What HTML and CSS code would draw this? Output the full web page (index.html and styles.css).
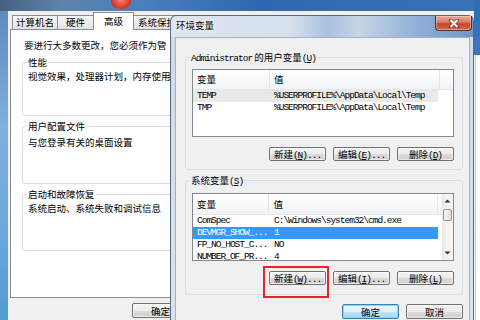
FILE: index.html
```html
<html>
  <head>
    <title>环境变量</title>
    <link rel="stylesheet" href="styles.css">
  </head>
  <body>
    <div class="side-window"></div>

    <!-- behind: system properties, only the part left of the dialog shows -->
    <div class="sysprop">
      <span class="sysprop-orb"></span>
      <div class="sysprop-client">
        <div class="tabs">
          <div class="tab tab-name">计算机名</div>
          <div class="tab tab-hw">硬件</div>
          <div class="tab tab-sel">高级</div>
          <div class="tab tab-prot">系统保护</div>
        </div>
        <div class="tab-panel">
          <p class="intro">要进行大多数更改，您必须作为管</p>
          <div class="sp-group sp-group-perf">
            <div class="sp-label">性能</div>
            <p class="sp-text">视觉效果，处理器计划，内存使用</p>
          </div>
          <div class="sp-group sp-group-profile">
            <div class="sp-label">用户配置文件</div>
            <p class="sp-text sp-text-profile">与您登录有关的桌面设置</p>
          </div>
          <div class="sp-group sp-group-boot">
            <div class="sp-label">启动和故障恢复</div>
            <p class="sp-text">系统启动、系统失败和调试信息</p>
          </div>
        </div>
        <div class="sysprop-footer">
          <button class="btn">确定</button>
        </div>
      </div>
    </div>

    <!-- front: environment variables -->
    <div class="envdlg">
      <div class="env-title">
        <span class="env-title-text">环境变量</span>
        <span class="close-btn">
          <svg width="12" height="9" viewBox="0 0 12 9">
            <path d="M2.5 1 L9.5 8 M9.5 1 L2.5 8" stroke="#5a130b" stroke-width="3.4" stroke-linecap="round" opacity="0.6"/>
            <path d="M2.5 1 L9.5 8 M9.5 1 L2.5 8" stroke="#ffffff" stroke-width="2"/>
          </svg>
        </span>
      </div>

      <div class="env-client">
        <div class="group group-user">
          <div class="group-label"><span class="mono">Administrator</span> 的用户变量<span class="mono">(<u>U</u>)</span></div>
          <div class="listview">
            <div class="lv-body">
              <div class="lv-head">
                <span class="col col1">变量</span>
                <span class="col col2">值</span>
                <span class="col col3"></span>
              </div>
              <div class="lv-row inactive">
                <span class="col col1 mono">TEMP</span>
                <span class="col col2 mono">%USERPROFILE%\AppData\Local\Temp</span>
              </div>
              <div class="lv-row">
                <span class="col col1 mono">TMP</span>
                <span class="col col2 mono">%USERPROFILE%\AppData\Local\Temp</span>
              </div>
            </div>
          </div>
          <div class="btn-row">
            <button class="btn">新建<span class="mono">(<u>N</u>)...</span></button>
            <button class="btn">编辑<span class="mono">(<u>E</u>)...</span></button>
            <button class="btn">删除<span class="mono">(<u>D</u>)</span></button>
          </div>
        </div>

        <div class="group group-sys">
          <div class="group-label">系统变量<span class="mono">(<u>S</u>)</span></div>
          <div class="listview">
            <div class="lv-body">
              <div class="lv-head lv-head-sys">
                <span class="col col1">变量</span>
                <span class="col col2">值</span>
                <span class="col col3"></span>
              </div>
              <div class="lv-row">
                <span class="col col1 mono">ComSpec</span>
                <span class="col col2 mono">C:\Windows\system32\cmd.exe</span>
              </div>
              <div class="lv-row selected">
                <span class="col col1 mono">DEVMGR_SHOW_...</span>
                <span class="col col2 mono">1</span>
              </div>
              <div class="lv-row">
                <span class="col col1 mono">FP_NO_HOST_C...</span>
                <span class="col col2 mono">NO</span>
              </div>
              <div class="lv-row">
                <span class="col col1 mono">NUMBER_OF_PR...</span>
                <span class="col col2 mono">4</span>
              </div>
            </div>
            <div class="lv-scroll">
              <span class="sb-arrow">
                <svg width="7" height="4" viewBox="0 0 7 4"><path d="M0.5 3.5 L3.5 0.5 L6.5 3.5 Z" fill="#333"/></svg>
              </span>
              <span class="sb-thumb"></span>
              <span class="sb-arrow sb-down">
                <svg width="7" height="4" viewBox="0 0 7 4"><path d="M0.5 0.5 L3.5 3.5 L6.5 0.5 Z" fill="#333"/></svg>
              </span>
            </div>
          </div>
          <div class="btn-row">
            <button class="btn btn-marked">新建<span class="mono">(<u>W</u>)...</span></button>
            <button class="btn">编辑<span class="mono">(<u>I</u>)...</span></button>
            <button class="btn">删除<span class="mono">(<u>L</u>)</span></button>
          </div>
        </div>

        <div class="env-footer">
          <button class="btn btn-ok btn-default">确定</button>
          <button class="btn btn-ok">取消</button>
        </div>
      </div>
    </div>
  </body>
</html>
```

FILE: styles.css
```css
body {
  margin: 0;
  width: 480px;
  height: 320px;
  overflow: hidden;
  position: relative;
  font-family: "Noto Sans CJK SC", sans-serif;
  font-size: 9.5px;
  line-height: 12px;
  color: #000;
  background: linear-gradient(180deg, #2f6ab2 0, #3a78c0 55px, #eef4fb 55px, #f7fafd 100%);
}

p {
  margin: 0;
  white-space: nowrap;
}

.mono {
  font-family: "Liberation Mono", monospace;
  font-size: 9.5px;
  letter-spacing: -1px;
}

.side-window {
  position: absolute;
  left: 475px;
  top: 55px;
  width: 5px;
  height: 265px;
  border-left: 1px solid #b9cde4;
  background: #fbfdff;
}

/* ---------- buttons ---------- */

.btn {
  height: 14px;
  width: 57px;
  padding: 0;
  border: 1px solid #707070;
  border-radius: 2px;
  background: linear-gradient(180deg, #f4f4f4 0%, #ebebeb 50%, #dddddd 50%, #cfcfcf 100%);
  box-shadow: inset 0 0 0 1px rgba(255, 255, 255, 0.6);
  font-family: "Noto Sans CJK SC", sans-serif;
  font-size: 9.5px;
  line-height: 12px;
  color: #000;
  white-space: nowrap;
  box-sizing: border-box;
}

.btn u {
  text-decoration-thickness: 1px;
}

.btn-ok {
  height: 15px;
}

.btn-default {
  border-color: #3c7fb1;
  background: linear-gradient(180deg, #eaf6fd 0%, #d9f0fc 50%, #bee6fd 50%, #a7d9f5 100%);
  box-shadow: inset 0 0 0 1px #8fd4f6;
}

.btn-marked {
  position: relative;
}

.btn-marked::after {
  content: "";
  position: absolute;
  left: -7px;
  right: -4px;
  top: -6px;
  bottom: -14px;
  border: 2px solid #e3262b;
}

/* ---------- system properties (behind) ---------- */

.sysprop {
  position: absolute;
  left: 0;
  top: 0;
  width: 474px;
  height: 320px;
  padding: 11px 0 0 8px;
  box-sizing: border-box;
  background:
    linear-gradient(90deg, #45617f 0, #5f82aa 60px, #4b7fbd 140px, #2f68b0 260px, #3a72b8 100%) top / 100% 11px no-repeat,
    linear-gradient(180deg, #5c87b8 0, #7fb0de 40%, #6aa6da 75%, #4f9bd2 100%);
}

.sysprop-orb {
  position: absolute;
  left: 111px;
  top: -6px;
  width: 20px;
  height: 15px;
  border-radius: 50%;
  background: radial-gradient(circle at 50% 35%, #ff8a78, #d0321f 70%);
}

.sysprop-client {
  height: 100%;
  background: #f0f0f0;
  padding: 1px 6px 0 2px;
  box-sizing: border-box;
  display: flex;
  flex-direction: column;
}

.tabs {
  display: flex;
  align-items: flex-end;
  height: 17px;
  padding-left: 2px;
}

.tab {
  height: 14px;
  border: 1px solid #898c95;
  border-bottom: none;
  margin-left: -1px;
  background: linear-gradient(180deg, #f6f6f6, #e4e4e4);
  text-align: center;
  line-height: 13px;
  box-sizing: border-box;
  white-space: nowrap;
}

.tab-name {
  width: 46px;
  margin-left: 0;
}

.tab-hw {
  width: 37px;
}

.tab-sel {
  width: 41px;
  height: 18px;
  margin-bottom: -1px;
  background: #fff;
  line-height: 16px;
  position: relative;
  z-index: 1;
}

.tab-prot {
  width: 48px;
}

.tab-panel {
  width: 168px;
  height: 269px;
  border: 1px solid #898c95;
  background: #fff;
  padding: 0 0 0 11px;
  box-sizing: border-box;
  overflow: hidden;
}

.intro {
  margin: 9px 0 0 2px;
}

.sp-group {
  border: 1px solid #d5dfe5;
  border-radius: 3px;
  width: 170px;
  margin-top: 10px;
  padding-left: 5px;
  box-sizing: border-box;
}

.sp-group-perf {
  height: 54px;
  margin-top: 11px;
}

.sp-group-profile {
  height: 58px;
}

.sp-group-boot {
  height: 57px;
}

.sp-label {
  width: fit-content;
  margin: -7px 0 0 -1px;
  padding: 0 1px;
  background: #fff;
  white-space: nowrap;
}

.sp-text {
  margin-top: 2px;
}

.sp-text-profile {
  margin-top: 4px;
}

.sysprop-footer {
  display: flex;
  padding: 5px 0 0 122px;
}

.sysprop-footer .btn {
  height: 15px;
}

/* ---------- environment variables (front) ---------- */

.envdlg {
  position: absolute;
  left: 170px;
  top: 15px;
  width: 304px;
  height: 320px;
  border: 1px solid #56697f;
  border-bottom: none;
  border-radius: 6px 6px 0 0;
  padding: 0 3px 0 4px;
  box-sizing: border-box;
  display: flex;
  flex-direction: column;
  background:
    linear-gradient(90deg, #dde5ee 0%, #d6e0eb 40%, #a9c1dd 52%, #c6d5e6 62%, #8eafd5 82%, #6f97c8 100%) top / 100% 21px no-repeat,
    linear-gradient(180deg, #cfdbe8, #d8e3ee);
}

.env-title {
  display: flex;
  align-items: flex-start;
  height: 21px;
  flex-shrink: 0;
}

.env-title-text {
  padding: 3px 0 0 1px;
  text-shadow: 0 0 4px #fff, 0 0 2px #fff;
}

.close-btn {
  margin-left: auto;
  margin-right: -2px;
  width: 37px;
  height: 15px;
  border: 1px solid #5b2a24;
  border-top: none;
  border-radius: 0 0 4px 4px;
  box-sizing: border-box;
  background: linear-gradient(180deg, #e8aa9c 0%, #d77a66 45%, #c8452f 55%, #d0664a 100%);
  box-shadow: inset 0 0 0 1px rgba(255, 220, 210, 0.5);
  display: flex;
  align-items: center;
  justify-content: center;
}

.env-client {
  flex: 1;
  background: #f0f0f0;
  border: 1px solid #a2b2c5;
  border-bottom: none;
  padding: 0 6px 0 9px;
  display: flex;
  flex-direction: column;
}

.group {
  border: 1px solid #d5dfe5;
  border-radius: 3px;
  padding: 0 8px 8px 6px;
}

.group-user {
  margin-top: 19px;
}

.group-sys {
  margin-top: 10px;
  padding-bottom: 9px;
}

.group-label {
  width: fit-content;
  margin: -7px 0 0 -2px;
  padding: 0 1px;
  background: #f0f0f0;
  white-space: nowrap;
}

.listview {
  height: 68px;
  margin-top: 4px;
  border: 1px solid #828790;
  background: #fff;
  display: flex;
  box-sizing: border-box;
  overflow: hidden;
}

.group-sys .listview {
  margin-top: 5px;
}

.lv-body {
  flex: 1;
  min-width: 0;
}

.lv-head {
  display: flex;
  height: 20px;
  background: linear-gradient(180deg, #ffffff, #f2f3f5);
  border-bottom: 1px solid #e3e6ea;
  box-sizing: border-box;
  line-height: 19px;
}

.lv-head-sys {
  height: 21px;
  line-height: 20px;
}

.col {
  padding-left: 4px;
  box-sizing: border-box;
  white-space: nowrap;
}

.col1 {
  width: 77px;
}

.col2 {
  width: 170px;
}

.lv-head .col1,
.lv-head .col2 {
  border-right: 1px solid #e3e6ea;
}

.col3 {
  flex: 1;
}

.lv-row {
  display: flex;
  height: 12px;
  line-height: 12px;
}

.lv-row.inactive .col {
  background: #e9e9e9;
}

.lv-row.selected .col {
  background: #3399ff;
  color: #fff;
}

.lv-row .col2 {
  width: 168px;
}

.lv-scroll {
  width: 11px;
  display: flex;
  flex-direction: column;
  align-items: center;
  background: linear-gradient(90deg, #e6e6e6, #f4f4f4 40%, #f4f4f4);
}

.sb-arrow {
  height: 14px;
  display: flex;
  align-items: center;
  justify-content: center;
}

.sb-thumb {
  width: 9px;
  height: 12px;
  margin-top: 1px;
  border: 1px solid #959595;
  border-radius: 2px;
  box-sizing: border-box;
  background: linear-gradient(90deg, #f5f5f5, #dedede);
}

.sb-down {
  margin-top: auto;
}

.btn-row {
  display: flex;
  justify-content: flex-end;
  gap: 7px;
  margin-top: 10px;
}

.env-footer {
  display: flex;
  justify-content: flex-end;
  gap: 7px;
  margin-top: 9px;
}
```
